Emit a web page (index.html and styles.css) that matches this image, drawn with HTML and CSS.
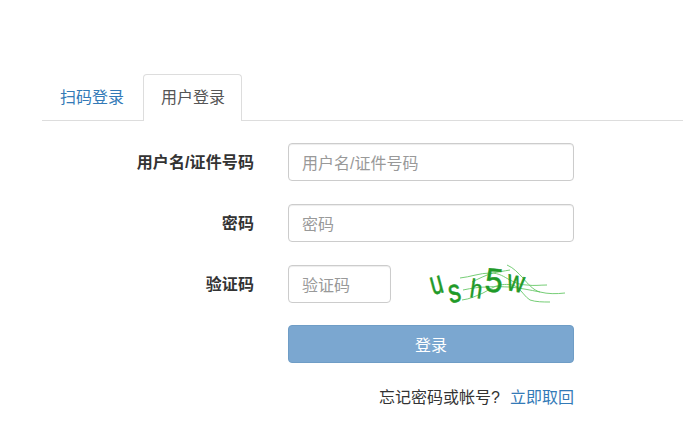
FILE: index.html
```html
<!DOCTYPE html>
<html lang="zh-CN">
<head>
<meta charset="utf-8">
<title>用户登录</title>
<link rel="stylesheet" href="styles.css">
</head>
<body>
<main class="page">
  <ul class="tabs">
    <li class="tab"><a href="#">扫码登录</a></li>
    <li class="tab active"><a href="#">用户登录</a></li>
  </ul>
  <form class="form">
    <div class="row">
      <label class="label">用户名/证件号码</label>
      <input class="input" type="text" placeholder="用户名/证件号码">
    </div>
    <div class="row">
      <label class="label">密码</label>
      <input class="input" type="text" placeholder="密码">
    </div>
    <div class="row row-captcha">
      <label class="label">验证码</label>
      <div class="captcha-wrap">
        <input class="input input-short" type="text" placeholder="验证码">
        <svg class="captcha" width="140" height="50" viewBox="0 0 140 50">
          <g fill="none" stroke="#66c766" stroke-width="0.9">
            <path d="M32 19 C42 18 52 14 62 14 C72 14 76 18 82 21 C88 24 92 26 99 26 C106 27 112 26 119 26"/>
            <path d="M79 6 C86 9 90 14 95 19 C100 25 105 31 112 33 C120 35 128 35 137 34"/>
            <path d="M34 41 C42 40 48 37 55 34 C61 31 66 27 72 26 C78 25 84 25 89 28 C94 32 97 38 102 41 C108 43 115 43 122 43"/>
            <path d="M44 23 C50 20 58 16 65 14 C70 13 76 12 82 11"/>
            <path d="M35 31 C44 29 52 28 59 28 C68 27 75 28 82 28 C92 29 102 31 112 33"/>
          </g>
          <g class="captcha-letters">
            <text transform="translate(5 36) rotate(-15) scale(.85 1.25)">u</text>
            <text transform="translate(22 44) rotate(-10) scale(.95 1.25)">s</text>
            <text transform="translate(41 38) rotate(8) scale(.85 1)">h</text>
            <text class="captcha-tall" transform="translate(56 32) rotate(6) scale(1 1.05)">5</text>
            <text transform="translate(78 31) rotate(10) scale(.9 1.15)">w</text>
          </g>
        </svg>
      </div>
    </div>
    <div class="row row-button">
      <span class="spacer"></span>
      <button class="submit" type="button">登录</button>
    </div>
    <div class="row row-link">
      <span class="spacer"></span>
      <p class="help">忘记密码或帐号?<a href="#">立即取回</a></p>
    </div>
  </form>
</main>
</body>
</html>
```
FILE: styles.css
```css
* {
  box-sizing: border-box;
}

html,
body {
  margin: 0;
  padding: 0;
  background: #fff;
}

body {
  font-family: "Liberation Sans", "Noto Sans CJK SC", sans-serif;
  font-size: 16px;
  color: #333;
  overflow: hidden;
}

.page {
  padding-top: 74px;
  padding-left: 42px;
}

.tabs {
  display: flex;
  margin: 0;
  padding: 0;
  list-style: none;
  border-bottom: 1px solid #ddd;
  height: 47px;
}

.tab {
  margin-right: 1px;
  height: 47px;
}

.tab a {
  display: block;
  height: 47px;
  padding: 12px 17px 0;
  line-height: 22px;
  color: #337ab7;
  text-decoration: none;
  border: 1px solid transparent;
  border-bottom: 0;
  border-radius: 4px 4px 0 0;
}

.tab.active a {
  padding-right: 16px;
  color: #555;
  background: #fff;
  border-color: #ddd;
}

.form {
  padding-top: 22px;
}

.row {
  display: flex;
  align-items: center;
  margin-bottom: 23px;
}

.label,
.spacer {
  flex: none;
  width: 212px;
  margin-right: 34px;
}

.label {
  font-weight: bold;
  text-align: right;
  line-height: 22px;
  letter-spacing: .1px;
  position: relative;
  top: 1px;
}

.input {
  width: 286px;
  height: 38px;
  padding: 8px 13px 4px;
  font: inherit;
  color: #555;
  background: #fff;
  border: 1px solid #ccc;
  border-radius: 4px;
  box-shadow: inset 0 1px 1px rgba(0, 0, 0, .075);
  outline: 0;
}

.input::placeholder {
  color: #999;
  opacity: 1;
}

.captcha-wrap {
  display: flex;
  align-items: center;
  height: 38px;
}

.input-short {
  width: 103px;
  margin-right: 37px;
}

.captcha {
  display: block;
  flex: none;
  overflow: visible;
}

.captcha-letters {
  font-family: "Liberation Sans", sans-serif;
  font-size: 26px;
  fill: #1f9a28;
  stroke: #1f9a28;
  stroke-width: 0.5;
}

.captcha-tall {
  font-size: 32px;
}

.row-captcha {
  margin-bottom: 22px;
}

.row-button {
  margin-bottom: 23px;
}

.submit {
  width: 286px;
  height: 38px;
  padding: 0;
  font: inherit;
  color: #fff;
  background: #7ba7d0;
  border: 1px solid #6f9dc6;
  border-radius: 4px;
}

.row-link {
  margin-bottom: 0;
}

.help {
  width: 286px;
  margin: 0;
  line-height: 24px;
  text-align: right;
  color: #333;
}

.help a {
  margin-left: 10px;
  color: #337ab7;
  text-decoration: none;
}
```
